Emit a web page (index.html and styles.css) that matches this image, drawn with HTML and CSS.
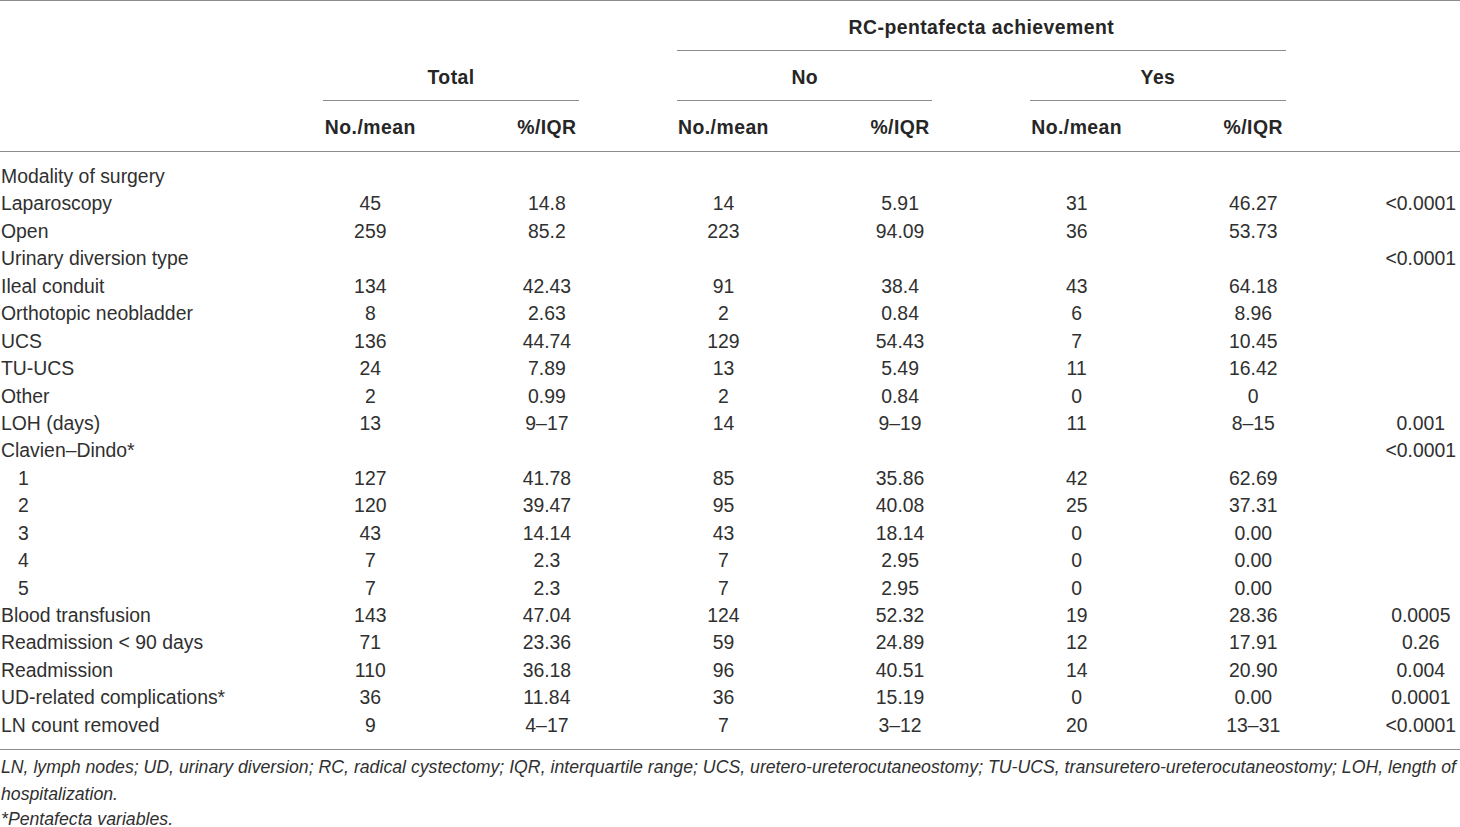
FILE: index.html
```html
<!DOCTYPE html>
<html lang="en">
<head>
<meta charset="utf-8">
<title>RC-pentafecta table</title>
<link rel="stylesheet" href="styles.css">
</head>
<body>
<div class="tbl">
  <div class="head">
    <div class="hcell grp rc">RC-pentafecta achievement</div>
    <div class="hcell grp c-total">Total</div>
    <div class="hcell grp c-no">No</div>
    <div class="hcell grp c-yes">Yes</div>
    <div class="hcell sub s1">No./mean</div>
    <div class="hcell sub s2">%/IQR</div>
    <div class="hcell sub s3">No./mean</div>
    <div class="hcell sub s4">%/IQR</div>
    <div class="hcell sub s5">No./mean</div>
    <div class="hcell sub s6">%/IQR</div>
  </div>
  <div class="body">
    <div class="row"><span class="lab">Modality of surgery</span><span></span><span></span><span></span><span></span><span></span><span></span><span class="p"></span></div>
    <div class="row"><span class="lab">Laparoscopy</span><span>45</span><span>14.8</span><span>14</span><span>5.91</span><span>31</span><span>46.27</span><span class="p">&lt;0.0001</span></div>
    <div class="row"><span class="lab">Open</span><span>259</span><span>85.2</span><span>223</span><span>94.09</span><span>36</span><span>53.73</span><span class="p"></span></div>
    <div class="row"><span class="lab">Urinary diversion type</span><span></span><span></span><span></span><span></span><span></span><span></span><span class="p">&lt;0.0001</span></div>
    <div class="row"><span class="lab">Ileal conduit</span><span>134</span><span>42.43</span><span>91</span><span>38.4</span><span>43</span><span>64.18</span><span class="p"></span></div>
    <div class="row"><span class="lab">Orthotopic neobladder</span><span>8</span><span>2.63</span><span>2</span><span>0.84</span><span>6</span><span>8.96</span><span class="p"></span></div>
    <div class="row"><span class="lab">UCS</span><span>136</span><span>44.74</span><span>129</span><span>54.43</span><span>7</span><span>10.45</span><span class="p"></span></div>
    <div class="row"><span class="lab">TU-UCS</span><span>24</span><span>7.89</span><span>13</span><span>5.49</span><span>11</span><span>16.42</span><span class="p"></span></div>
    <div class="row"><span class="lab">Other</span><span>2</span><span>0.99</span><span>2</span><span>0.84</span><span>0</span><span>0</span><span class="p"></span></div>
    <div class="row"><span class="lab">LOH (days)</span><span>13</span><span>9–17</span><span>14</span><span>9–19</span><span>11</span><span>8–15</span><span class="p">0.001</span></div>
    <div class="row"><span class="lab">Clavien–Dindo*</span><span></span><span></span><span></span><span></span><span></span><span></span><span class="p">&lt;0.0001</span></div>
    <div class="row"><span class="lab ind">1</span><span>127</span><span>41.78</span><span>85</span><span>35.86</span><span>42</span><span>62.69</span><span class="p"></span></div>
    <div class="row"><span class="lab ind">2</span><span>120</span><span>39.47</span><span>95</span><span>40.08</span><span>25</span><span>37.31</span><span class="p"></span></div>
    <div class="row"><span class="lab ind">3</span><span>43</span><span>14.14</span><span>43</span><span>18.14</span><span>0</span><span>0.00</span><span class="p"></span></div>
    <div class="row"><span class="lab ind">4</span><span>7</span><span>2.3</span><span>7</span><span>2.95</span><span>0</span><span>0.00</span><span class="p"></span></div>
    <div class="row"><span class="lab ind">5</span><span>7</span><span>2.3</span><span>7</span><span>2.95</span><span>0</span><span>0.00</span><span class="p"></span></div>
    <div class="row"><span class="lab">Blood transfusion</span><span>143</span><span>47.04</span><span>124</span><span>52.32</span><span>19</span><span>28.36</span><span class="p">0.0005</span></div>
    <div class="row"><span class="lab">Readmission &lt; 90 days</span><span>71</span><span>23.36</span><span>59</span><span>24.89</span><span>12</span><span>17.91</span><span class="p">0.26</span></div>
    <div class="row"><span class="lab">Readmission</span><span>110</span><span>36.18</span><span>96</span><span>40.51</span><span>14</span><span>20.90</span><span class="p">0.004</span></div>
    <div class="row"><span class="lab">UD-related complications*</span><span>36</span><span>11.84</span><span>36</span><span>15.19</span><span>0</span><span>0.00</span><span class="p">0.0001</span></div>
    <div class="row"><span class="lab">LN count removed</span><span>9</span><span>4–17</span><span>7</span><span>3–12</span><span>20</span><span>13–31</span><span class="p">&lt;0.0001</span></div>
  </div>
  <div class="foot">
    <p>LN, lymph nodes; UD, urinary diversion; RC, radical cystectomy; IQR, interquartile range; UCS, uretero-ureterocutaneostomy; TU-UCS, transuretero-ureterocutaneostomy; LOH, length of hospitalization.</p>
    <p class="last">*Pentafecta variables.</p>
  </div>
</div>
</body>
</html>
```

FILE: styles.css
```css
html, body {
  margin: 0;
  padding: 0;
  background: #ffffff;
}

body {
  font-family: "Liberation Sans", Arial, sans-serif;
  color: #303030;
  font-size: 19.4px;
}

.tbl {
  width: 1460px;
  border-top: 1px solid #8c8c8c;
}

.head,
.row {
  display: grid;
  grid-template-columns: 282px repeat(6, 176.6px) 1fr;
}

.head {
  grid-template-rows: 50px 50px 50px;
  border-bottom: 1px solid #8c8c8c;
}

.hcell {
  font-weight: bold;
  letter-spacing: 0.45px;
  display: flex;
  align-items: center;
  justify-content: center;
  padding-top: 3px;
  box-sizing: border-box;
  white-space: nowrap;
  color: #262626;
}

.grp {
  margin: 0 56px 0 42px;
  border-bottom: 1px solid #8c8c8c;
}

.rc {
  grid-column: 4 / 8;
  grid-row: 1;
}

.c-total {
  grid-column: 2 / 4;
  grid-row: 2;
  margin-left: 41px;
}

.c-no {
  grid-column: 4 / 6;
  grid-row: 2;
}

.c-yes {
  grid-column: 6 / 8;
  grid-row: 2;
}

.sub { grid-row: 3; }
.s1 { grid-column: 2; }
.s2 { grid-column: 3; }
.s3 { grid-column: 4; }
.s4 { grid-column: 5; }
.s5 { grid-column: 6; }
.s6 { grid-column: 7; }

.body {
  padding: 11px 0 10px;
  border-bottom: 1px solid #8c8c8c;
}

.row {
  height: 27.45px;
  line-height: 27.45px;
}

.row span {
  text-align: center;
  white-space: nowrap;
}

.row .lab {
  text-align: left;
  padding-left: 1px;
}

.row .lab.ind {
  padding-left: 18px;
}

.row .p {
  padding-left: 40px;
}

.foot {
  padding-top: 4px;
}

.foot p {
  margin: 0;
  font-style: italic;
  font-size: 17.7px;
  line-height: 26.5px;
  padding-left: 1px;
}

.foot p.last {
  line-height: 18px;
  margin-top: 3px;
}
```
